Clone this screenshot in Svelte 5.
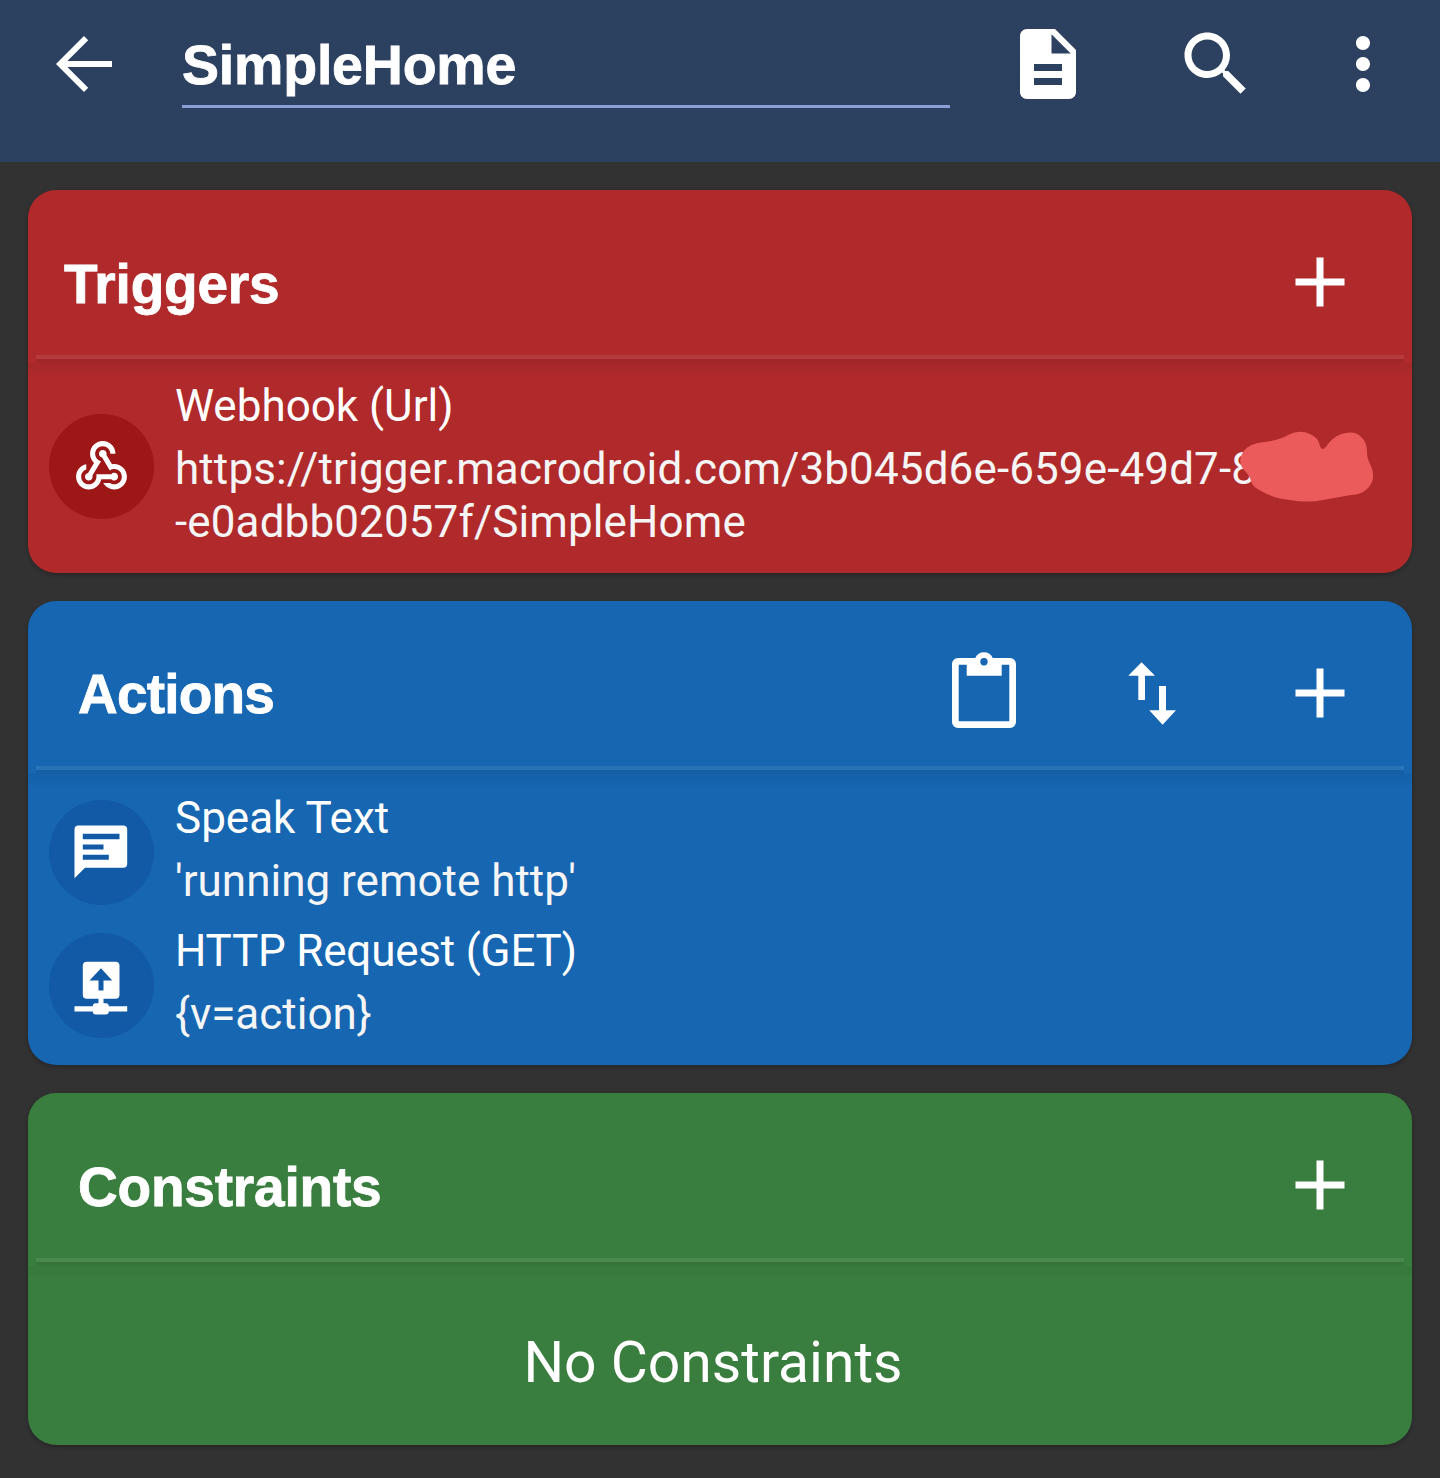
<script>
	const webhook =
		'M10 15h5.88c.27-.31.67-.5 1.12-.5.83 0 1.5.67 1.5 1.5s-.67 1.5-1.5 1.5c-.44 0-.84-.19-1.12-.5H11.9c-.46 2.28-2.48 4-4.9 4-2.76 0-5-2.24-5-5 0-2.42 1.72-4.44 4-4.9v2.07c-1.16.41-2 1.53-2 2.83 0 1.65 1.35 3 3 3s3-1.35 3-3v-1zm2.5-11c1.65 0 3 1.35 3 3h2c0-2.76-2.24-5-5-5s-5 2.24-5 5c0 1.43.6 2.71 1.56 3.62l-2.35 3.9c-.68.14-1.21.75-1.21 1.48 0 .83.67 1.5 1.5 1.5s1.5-.67 1.5-1.5c0-.16-.02-.31-.07-.45l3.38-5.63C10.49 9.61 9.5 8.42 9.5 7c0-1.65 1.35-3 3-3zm4.5 9c-.64 0-1.23.2-1.72.54l-3.05-5.07C11.53 8.35 11 7.74 11 7c0-.83.67-1.5 1.5-1.5S14 6.17 14 7c0 .15-.02.29-.06.43l2.19 3.65c.28-.05.57-.08.87-.08 2.76 0 5 2.24 5 5s-2.24 5-5 5c-1.85 0-3.47-1.01-4.33-2.5h2.67c.48.32 1.05.5 1.66.5 1.65 0 3-1.35 3-3s-1.35-3-3-3z';
	const add = 'M19 13h-6v6h-2v-6H5v-2h6V5h2v6h6v2z';
</script>

<div class="page">
	<header class="topbar">
		<svg class="icon" viewBox="0 0 24 24"><path class="stroke" d="M20 12H5.200M12.600 4.600 5.200 12l7.400 7.400" /></svg>
		<div class="field">SimpleHome</div>
		<div class="actions">
			<svg class="icon" viewBox="0 0 24 24"><path d="M14 2H6c-1.1 0-1.99.9-1.99 2L4 20c0 1.1.89 2 1.99 2H18c1.1 0 2-.9 2-2V8l-6-6zm2 16H8v-2h8v2zm0-4H8v-2h8v2zm-3-5V3.5L18.5 9H13z" /></svg>
			<svg class="icon" viewBox="0 0 24 24"><path d="M15.5 14h-.79l-.28-.27C15.41 12.59 16 11.11 16 9.5 16 5.91 13.09 3 9.5 3S3 5.91 3 9.5 5.91 16 9.5 16c1.61 0 3.09-.59 4.23-1.57l.27.28v.79l5 4.99L20.49 19l-4.99-5zm-6 0C7.01 14 5 11.99 5 9.5S7.01 5 9.5 5 14 7.01 14 9.5 11.99 14 9.5 14z" /></svg>
			<svg class="icon more" viewBox="0 0 24 24"><path d="M12 8c1.1 0 2-.9 2-2s-.9-2-2-2-2 .9-2 2 .9 2 2 2zm0 2c-1.1 0-2 .9-2 2s.9 2 2 2 2-.9 2-2-.9-2-2-2zm0 6c-1.1 0-2 .9-2 2s.9 2 2 2 2-.9 2-2-.9-2-2-2z" /></svg>
		</div>
	</header>

	<main class="cards">
		<section class="card red">
			<div class="head">
				<h2 class="first">Triggers</h2>
				<svg class="icon" viewBox="0 0 24 24"><path d={add} /></svg>
			</div>
			<div class="rule"></div>
			<div class="body">
				<div class="row">
					<div class="badge">
						<svg class="badge-icon" viewBox="0 0 24 24"><path d={webhook} /></svg>
					</div>
					<div class="text">
						<div class="name">Webhook (Url)</div>
						<div class="url">https://trigger.macrodroid.com/3b045d6e-659e-49d7-8</div>
						<div class="url">-e0adbb02057f/SimpleHome</div>
					</div>
					<svg class="scribble" viewBox="0 0 136 72">
						<path d="M5 20Q11 11 27 10 42 8 50 3 62-3 72 2 81 6 82 14 84 21 90 12 98 2 108 1 118-1 124 6 129 11 129 20 129 27 133 34 138 46 131 55 124 63 113 63 102 65 85 68 69 71 52 68 35 66 25 60 14 55 13 49 12 44 6 38-1 30 5 20Z" />
					</svg>
				</div>
			</div>
		</section>

		<section class="card blue">
			<div class="head">
				<h2 class="short">Actions</h2>
				<div class="tools">
					<svg class="tool" viewBox="0 0 84 84">
						<path d="M16 7h52a6 6 0 0 1 6 6v58a6 6 0 0 1-6 6H16a6 6 0 0 1-6-6V13a6 6 0 0 1 6-6Zm.7 6.700v56.600h50.600V13.700Z" fill-rule="evenodd" />
						<path d="M24.700 7h8.550a9.500 9.500 0 0 1 17.500 0h8.950v17.700h-35Z" />
						<circle class="hole" cx="42" cy="10.700" r="3.700" />
					</svg>
					<svg class="tool" viewBox="0 0 84 84">
						<path d="M31.600 11.300 45 24.700H35V49h-6.700V24.700H18.300Z" />
						<path d="M49 35h7v24.300h10L52.600 73.700 39.300 59.300H49Z" />
					</svg>
					<svg class="icon" viewBox="0 0 24 24"><path d={add} /></svg>
				</div>
			</div>
			<div class="rule"></div>
			<div class="body">
				<div class="row">
					<div class="badge">
						<svg class="badge-icon" viewBox="0 0 61 61">
							<path d="M7.500 3.500h44.700a4 4 0 0 1 4 4v34.300a4 4 0 0 1-4 4H14L3.500 56.200V7.500a4 4 0 0 1 4-4Zm4.300 8.300v5.400h36.700v-5.400Zm0 10.700v5h20.700v-5Zm0 10.300v5h26v-5Z" fill-rule="evenodd" />
						</svg>
					</div>
					<div class="text">
						<div class="name">Speak Text</div>
						<div>'running remote http'</div>
					</div>
				</div>
				<div class="row">
					<div class="badge">
						<svg class="badge-icon" viewBox="0 0 61 61">
							<path d="M15.800 6.800h28.700a4 4 0 0 1 4 4v29a4 4 0 0 1-4 4H32.500v4.400h2.300a3 3 0 0 1 3 3h18.400v5.300H37.800a3 3 0 0 1-3 3H24.800a3 3 0 0 1-3-3H3.500v-5.300h18.300a3 3 0 0 1 3-3h2.700v-4.400H15.800a4 4 0 0 1-4-4v-29a4 4 0 0 1 4-4ZM30 13.200 18.500 25.500h9v10h5v-10h8.700Z" fill-rule="evenodd" />
						</svg>
					</div>
					<div class="text">
						<div class="name tight">HTTP Request (GET)</div>
						<div>&lbrace;v=action&rbrace;</div>
					</div>
				</div>
			</div>
		</section>

		<section class="card green">
			<div class="head">
				<h2>Constraints</h2>
				<svg class="icon" viewBox="0 0 24 24"><path d={add} /></svg>
			</div>
			<div class="rule"></div>
			<div class="body empty">No Constraints</div>
		</section>
	</main>
</div>

<style>
	:global(body) {
		margin: 0;
		background: #323232;
	}
	.page {
		font-family: Roboto, 'Liberation Sans', sans-serif;
		color: #fff;
		height: 1478px;
		overflow: hidden;
	}
	svg {
		display: block;
		fill: #fff;
		flex: none;
	}
	.icon {
		width: 84px;
		height: 84px;
	}
	.stroke {
		fill: none;
		stroke: #fff;
		stroke-width: 1.7;
	}
	.topbar {
		display: flex;
		align-items: flex-start;
		box-sizing: border-box;
		height: 162px;
		padding: 22px 0 0 42px;
		background: #2c4160;
	}
	.field {
		width: 768px;
		height: 86px;
		margin-left: 56px;
		box-sizing: border-box;
		border-bottom: 3px solid #8a9fd6;
		font-family: 'Liberation Sans', Arial, sans-serif;
		font-size: 55.5px;
		font-weight: 700;
		line-height: 86px;
		letter-spacing: -0.2px;
		-webkit-text-stroke: 0.8px #fff;
	}
	.actions {
		display: flex;
		gap: 84px;
		margin-left: 56px;
	}
	.more {
		margin-left: -21px;
	}
	.cards {
		display: flex;
		flex-direction: column;
		gap: 28px;
		padding: 28px;
	}
	.card {
		border-radius: 28px;
		overflow: hidden;
		position: relative;
		box-shadow: 0 2px 4px rgba(0, 0, 0, 0.25);
	}
	.red {
		background: #b02a2b;
		--badge: #9d1717;
	}
	.blue {
		background: #1666b2;
		--badge: #1259a6;
	}
	.green {
		background: #3a7e3f;
	}
	.head {
		display: flex;
		align-items: center;
		justify-content: space-between;
		box-sizing: border-box;
		height: 165px;
		padding: 18px 50px 0 50px;
	}
	.head .first {
		margin-left: -14px;
	}
	h2 {
		margin: 4px 0 0;
		font-family: 'Liberation Sans', Arial, sans-serif;
		font-size: 55px;
		font-weight: 700;
		letter-spacing: -0.2px;
		-webkit-text-stroke: 0.8px #fff;
	}
	.head .short {
		letter-spacing: -0.8px;
	}
	.tools {
		display: flex;
		align-items: center;
		gap: 84px;
		margin-top: 2px;
	}
	.tool {
		width: 84px;
		height: 84px;
	}
	.hole {
		fill: #1666b2;
	}
	.rule {
		height: 8px;
		margin: 0 8px;
		background: linear-gradient(rgba(255, 255, 255, 0.08) 50%, rgba(0, 0, 0, 0.08) 50%);
	}
	.body {
		padding: 10.5px 0 13px;
		background: linear-gradient(rgba(0, 0, 0, 0.05), rgba(0, 0, 0, 0.025) 11px, transparent 11px);
	}
	.blue .body {
		padding-top: 12.5px;
	}
	.row {
		display: flex;
		align-items: center;
		gap: 21px;
		padding-left: 21px;
		position: relative;
	}
	.badge {
		display: flex;
		align-items: center;
		justify-content: center;
		flex: none;
		width: 105px;
		height: 105px;
		border-radius: 50%;
		background: var(--badge);
	}
	.badge-icon {
		width: 61px;
		height: 61px;
	}
	.text {
		padding: 6px 0 11px;
		font-size: 44px;
		line-height: 53px;
		white-space: nowrap;
		color: #f5f5f5;
	}
	.name {
		margin-bottom: 10px;
		color: #fff;
	}
	.tight {
		letter-spacing: -0.2px;
	}
	.url {
		letter-spacing: 0.12px;
	}
	.scribble {
		position: absolute;
		right: 38px;
		top: 58.500px;
		width: 136px;
		height: 72px;
		fill: #ec5b5b;
		overflow: visible;
	}
	.empty {
		display: flex;
		align-items: center;
		justify-content: center;
		box-sizing: border-box;
		height: 179px;
		padding: 13px 14px 0 0;
		font-size: 57px;
	}
</style>
